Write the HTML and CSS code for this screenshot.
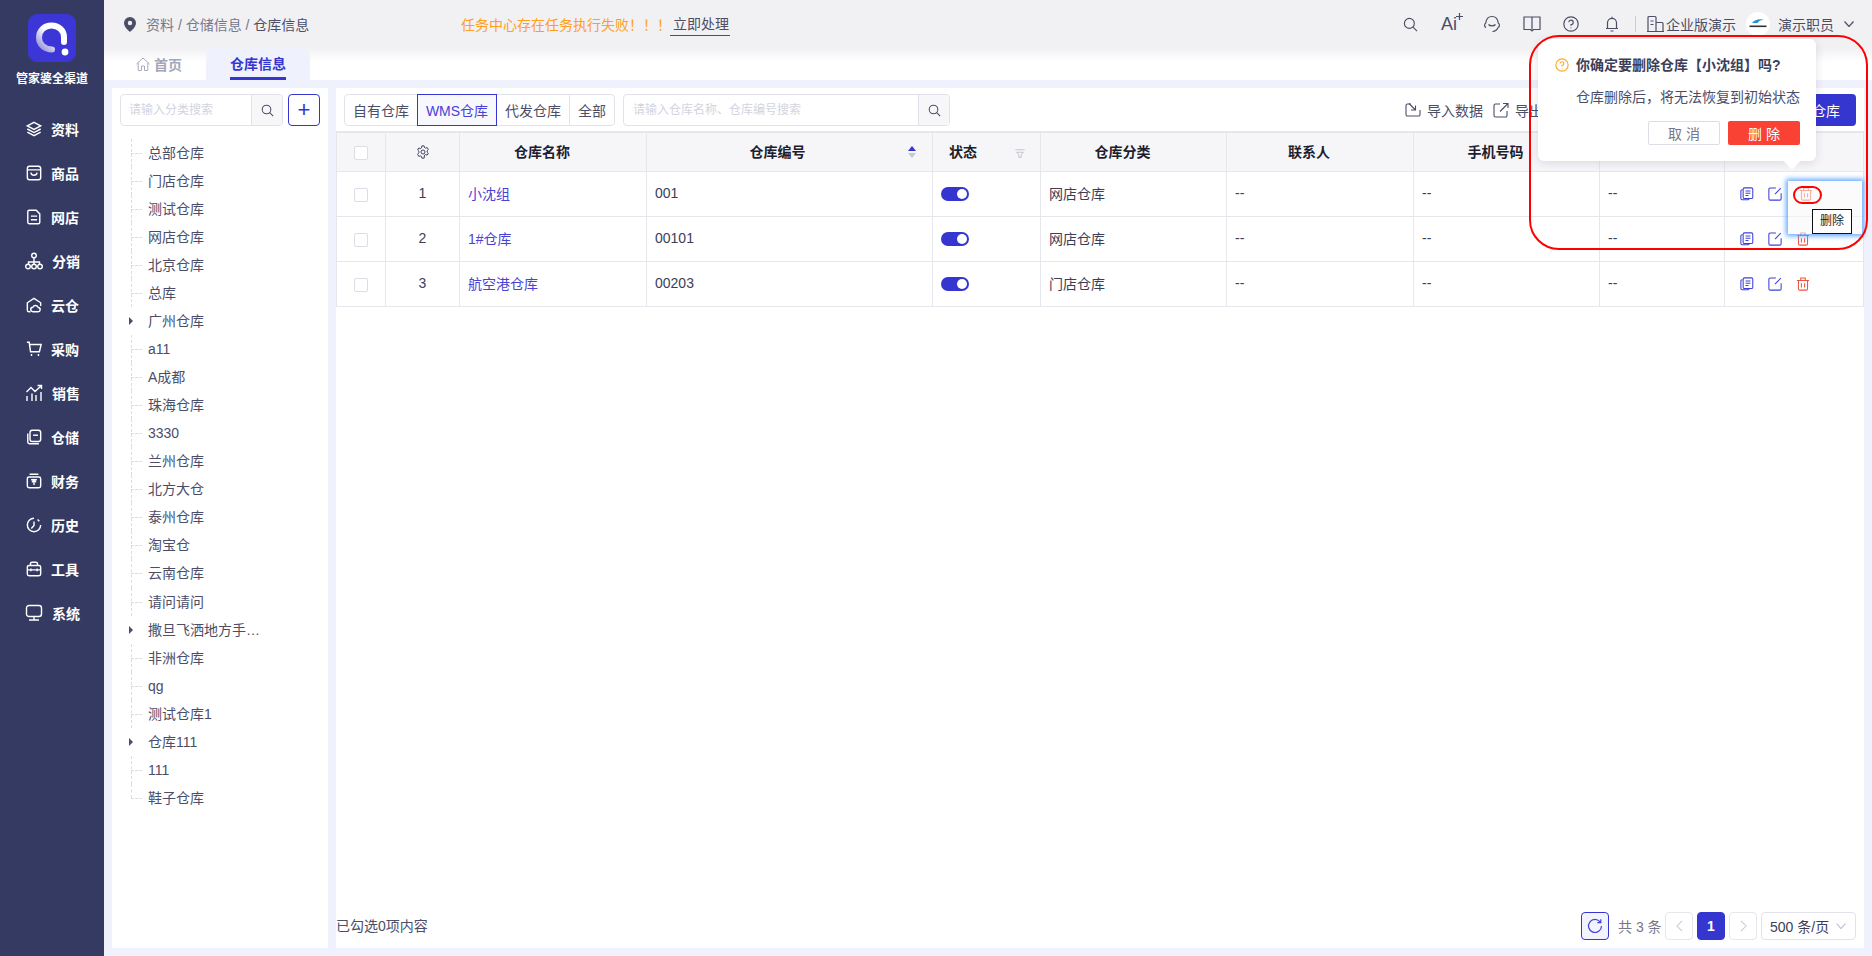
FILE: index.html
```html
<!DOCTYPE html>
<html lang="zh-CN">
<head>
<meta charset="utf-8">
<title>仓库信息</title>
<link rel="stylesheet" href="styles.css">
</head>
<body>
<svg class="sprite" width="0" height="0" aria-hidden="true">
  <symbol id="i-search" viewBox="0 0 16 16"><circle cx="6.800" cy="6.800" r="5.300"/><path d="M10.700 10.700 15 15"/></symbol>
  <symbol id="i-copy" viewBox="0 0 16 16"><path d="M3 3.200H2.400A1.400 1.400 0 0 0 1 4.600v8.600a1.400 1.400 0 0 0 1.400 1.400H9a1.400 1.400 0 0 0 1.400-1.200"/><rect x="3.600" y="1" width="11" height="12.200" rx="1.600"/><path d="M6.300 4.600h5.600M6.300 7.200h5.600M6.300 9.800h3.400"/></symbol>
  <symbol id="i-edit" viewBox="0 0 16 16"><path d="M9 1.200H2.600A1.600 1.600 0 0 0 1 2.800v10.600A1.600 1.600 0 0 0 2.600 15h10.800a1.600 1.600 0 0 0 1.600-1.600V7"/><path d="M8 8.200 14.600 1.400"/></symbol>
  <symbol id="i-trash" viewBox="0 0 16 16"><path d="M1 4h14M5.400 4V1.200h5.200V4M2.800 4v9.400A1.600 1.600 0 0 0 4.400 15h7.200a1.600 1.600 0 0 0 1.600-1.600V4M6.200 7v5M9.800 7v5"/></symbol>
</svg>

<div class="app">
  <aside class="sidebar">
    <div class="brand">
      <svg class="logo" viewBox="0 0 48 48">
        <defs><linearGradient id="lg" x1="0" y1="1" x2="1" y2="0"><stop offset="0" stop-color="#8f8bd8"/><stop offset=".55" stop-color="#fff"/></linearGradient></defs>
        <rect width="48" height="48" rx="9" fill="#3d36d6"/>
        <path d="M24 35.500C16 35.500 11 30 11 23.500 11 16.500 16.500 11.500 23.500 11.500S36 16.500 36 23v5" fill="none" stroke="url(#lg)" stroke-width="6" stroke-linecap="round"/>
        <circle cx="37" cy="38" r="3.400" fill="#fff"/>
      </svg>
      <div class="brand-name">管家婆全渠道</div>
    </div>
    <nav class="menu">
      <a class="menu-item"><svg class="menu-icon" viewBox="0 0 18 18"><path d="M9 1.500 16.500 5.500 9 9.500 1.500 5.500Z"/><path d="M1.500 9 9 13l7.500-4M1.500 12.500 9 16.500l7.500-4"/></svg><span>资料</span></a>
      <a class="menu-item"><svg class="menu-icon" viewBox="0 0 18 18"><rect x="1.500" y="1.500" width="15" height="15" rx="2.500"/><path d="M1.500 5.500h15M5.500 8.500c.4 2 1.800 3 3.500 3s3.100-1 3.500-3"/></svg><span>商品</span></a>
      <a class="menu-item"><svg class="menu-icon" viewBox="0 0 18 18"><path d="M3.500 1.500h8l4 4v9.500a1.500 1.500 0 0 1-1.500 1.500H3.500A1.500 1.500 0 0 1 2 15V3a1.500 1.500 0 0 1 1.500-1.500Z"/><path d="M5.500 8h7M5.500 12h7"/></svg><span>网店</span></a>
      <a class="menu-item menu-wide"><svg class="menu-icon" viewBox="0 0 18 18"><circle cx="9" cy="3.500" r="2.300"/><circle cx="3" cy="14.500" r="2.300"/><circle cx="9" cy="14.500" r="2.300"/><circle cx="15" cy="14.500" r="2.300"/><path d="M9 5.800v6.400M3.500 12V10h11v2"/></svg><span>分销</span></a>
      <a class="menu-item"><svg class="menu-icon" viewBox="0 0 18 18"><path d="M5 16.500H3a1.500 1.500 0 0 1-1.500-1.500V6.500L9 1.500l7.500 5V10"/><path d="M8 16.500a2.500 2.500 0 0 1-.3-5 3.300 3.300 0 0 1 6.100.4 2.300 2.300 0 0 1-.3 4.600Z"/></svg><span>云仓</span></a>
      <a class="menu-item"><svg class="menu-icon" viewBox="0 0 18 18"><path d="M1 1.500h2.600l1.500 10.500h10l1.900-8H3.900"/><path d="M6.200 14.500v2.500M14 14.500v2.500"/></svg><span>采购</span></a>
      <a class="menu-item menu-wide"><svg class="menu-icon" viewBox="0 0 18 18"><path d="M1.500 8 6 3.500l4 4 6-5.500M12.500 1.500H16.500V5M2 12v5M7 9.500V17M11 11v6M16 8v9"/></svg><span>销售</span></a>
      <a class="menu-item"><svg class="menu-icon" viewBox="0 0 18 18"><path d="M2 5v9.500A2 2 0 0 0 4 16.500h10.500"/><rect x="4.500" y="1.500" width="12" height="12.500" rx="2.500"/><path d="M8 7h5.500"/></svg><span>仓储</span></a>
      <a class="menu-item"><svg class="menu-icon" viewBox="0 0 18 18"><rect x="1.500" y="4.500" width="15" height="12" rx="2"/><path d="M4 1.500h10M5.800 7.500h6.400M9 7.500v6M6.800 10.500 9 7.500l2.200 3"/></svg><span>财务</span></a>
      <a class="menu-item"><svg class="menu-icon" viewBox="0 0 18 18"><path d="M16.500 9A7.500 7.500 0 1 1 9 1.500"/><path d="M9 5v4.500L6 13M13 2.800l2 2"/></svg><span>历史</span></a>
      <a class="menu-item"><svg class="menu-icon" viewBox="0 0 18 18"><rect x="1.500" y="5" width="15" height="11.500" rx="2"/><path d="M5 5V3.500a2 2 0 0 1 2-2h4a2 2 0 0 1 2 2V5M1.500 10h15M5.500 8.500v3M12.500 8.500v3"/></svg><span>工具</span></a>
      <a class="menu-item menu-wide"><svg class="menu-icon" viewBox="0 0 18 18"><rect x="1.500" y="1.500" width="15" height="11" rx="2.500"/><path d="M4 16h10M9 12.500V16"/></svg><span>系统</span></a>
    </nav>
  </aside>

  <div class="workspace">
    <header class="topbar">
      <div class="crumbs">
        <svg class="pin" viewBox="0 0 12 15"><path d="M6 0a6 6 0 0 0-6 6c0 3.800 4.300 7.600 6 9 1.700-1.400 6-5.200 6-9a6 6 0 0 0-6-6Zm0 8.200A2.200 2.200 0 1 1 6 3.800a2.200 2.200 0 0 1 0 4.400Z"/></svg>
        <span class="crumb-text">资料 / 仓储信息 / <em class="crumb-last">仓库信息</em></span>
      </div>
      <div class="notice"><span class="notice-text">任务中心存在任务执行失败！！！</span><a class="notice-link">立即处理</a></div>
      <div class="tools">
        <svg class="tool tool-search"><use href="#i-search"/></svg>
        <span class="tool-ai">Ai<svg class="ai-star" viewBox="0 0 8 8"><path d="M4 0v8M0 4h8"/></svg></span>
        <svg class="tool tool-head" viewBox="0 0 18 18"><path d="M3 12.500C1.300 11.800 1 9 2.800 8 3.200 4 5.800 1.500 9 1.500S14.800 4 15.200 8c1.800 1 1.500 3.800-.2 4.500"/><path d="M5.500 9.500c1.500 1.800 5.500 1.800 7 0"/><path d="M15 12.500c-.8 2.400-3 3.800-5.500 4"/></svg>
        <svg class="tool tool-book" viewBox="0 0 18 16"><path d="M1 1h16v12.500h-6.500L9 15l-1.500-1.500H1ZM9 1v12.500"/></svg>
        <svg class="tool tool-help" viewBox="0 0 16 16"><circle cx="8" cy="8" r="7.200"/><path d="M5.800 6.200A2.200 2.200 0 1 1 8 8.600v1.200M8 11.600v.6"/></svg>
        <svg class="tool tool-bell" viewBox="0 0 14 16"><path d="M1 12.500h12M2.500 12.500V6.800a4.500 4.500 0 0 1 9 0v5.700M5.500 15h3M7 .8v1.500"/></svg>
        <span class="tool-sep"></span>
        <svg class="tool tool-org" viewBox="0 0 18 18"><path d="M1.500 16.500V2.500a1 1 0 0 1 1-1h6a1 1 0 0 1 1 1v14M9.500 7.500h6a1 1 0 0 1 1 1v8M.5 16.500h17M4 6h3M4 9.500h3"/></svg>
        <span class="org-name">企业版演示</span>
        <svg class="avatar" viewBox="0 0 24 24"><circle cx="12" cy="12" r="12" fill="#fff"/><path d="M6 11c3-3.500 8-4.500 12-3-3-.3-5 .5-6.500 3Z" fill="#1f8fe0"/><rect x="3.500" y="13.500" width="17" height="1.600" fill="#333"/></svg>
        <span class="user-name">演示职员</span>
        <svg class="tool tool-chev" viewBox="0 0 10 6"><path d="M.5.500 5 5.500 9.500.500"/></svg>
      </div>
    </header>

    <div class="tabs">
      <a class="tab tab-home"><svg class="home-icon" viewBox="0 0 14 14"><path d="M.5 7 7 1l6.500 6M2.200 5.800v7.700h3.300V9h3v4.500h3.300V5.800"/></svg>首页</a>
      <a class="tab tab-active"><span class="tab-label">仓库信息</span></a>
    </div>

    <main class="content">
      <section class="tree-panel">
        <div class="tree-search">
          <div class="search-box">
            <span class="search-input">请输入分类搜索</span>
            <span class="search-btn"><svg class="search-icon"><use href="#i-search"/></svg></span>
          </div>
          <button class="add-btn">+</button>
        </div>
        <ul class="tree">
          <li class="leaf">总部仓库</li><li class="leaf">门店仓库</li><li class="leaf">测试仓库</li><li class="leaf">网店仓库</li><li class="leaf">北京仓库</li><li class="leaf">总库</li>
          <li class="branch">广州仓库</li>
          <li class="leaf">a11</li><li class="leaf">A成都</li><li class="leaf">珠海仓库</li><li class="leaf">3330</li><li class="leaf">兰州仓库</li><li class="leaf">北方大仓</li><li class="leaf">泰州仓库</li><li class="leaf">淘宝仓</li><li class="leaf">云南仓库</li><li class="leaf">请问请问</li>
          <li class="branch">撒旦飞洒地方手…</li>
          <li class="leaf">非洲仓库</li><li class="leaf">qg</li><li class="leaf">测试仓库1</li>
          <li class="branch">仓库111</li>
          <li class="leaf">111</li><li class="leaf leaf-last">鞋子仓库</li>
        </ul>
      </section>

      <section class="main-panel">
        <div class="toolbar">
          <div class="segments">
            <span class="seg seg-own">自有仓库</span>
            <span class="seg seg-wms">WMS仓库</span>
            <span class="seg seg-drop">代发仓库</span>
            <span class="seg seg-all">全部</span>
          </div>
          <div class="search-box search-wide">
            <span class="search-input">请输入仓库名称、仓库编号搜索</span>
            <span class="search-btn"><svg class="search-icon"><use href="#i-search"/></svg></span>
          </div>
          <div class="toolbar-right">
            <a class="tool-link"><svg class="link-icon" viewBox="0 0 16 16"><path d="M6 2H2.500A1.500 1.500 0 0 0 1 3.500v9A1.500 1.500 0 0 0 2.500 14h11a1.500 1.500 0 0 0 1.500-1.500V8"/><path d="M4 1.500 10.500 8M10.500 3.500V8H6"/></svg>导入数据</a>
            <a class="tool-link"><svg class="link-icon" viewBox="0 0 16 16"><path d="M7 2H2.500A1.500 1.500 0 0 0 1 3.500v10A1.500 1.500 0 0 0 2.500 15h10a1.500 1.500 0 0 0 1.500-1.500V9"/><path d="M7 9.500 15 1.500M10 1.500h5V6"/></svg>导出</a>
            <button class="primary-btn">新增仓库</button>
          </div>
        </div>

        <table class="grid">
          <colgroup>
            <col class="c-check"><col class="c-index"><col class="c-name"><col class="c-code"><col class="c-status"><col class="c-cat"><col class="c-contact"><col class="c-phone"><col class="c-addr"><col class="c-ops">
          </colgroup>
          <thead>
            <tr>
              <th class="th-plain"><span class="check"></span></th>
              <th class="th-plain"><svg class="gear" viewBox="0 0 16 16"><path d="M6.700 1h2.600l.4 1.900 1.300.7 1.800-.7 1.300 2.300-1.400 1.300v1.500l1.400 1.300-1.300 2.300-1.800-.7-1.300.7L9.300 15H6.700l-.4-1.900-1.300-.7-1.800.7-1.300-2.300L3.300 8.500V7L1.900 5.700l1.300-2.300 1.800.7 1.300-.7Z"/><circle cx="8" cy="8" r="2.300"/></svg></th>
              <th>仓库名称</th>
              <th class="th-sort"><span class="th-flex">仓库编号</span><span class="sorter"><i class="sort-up"></i><i class="sort-down"></i></span></th>
              <th class="th-status"><span>状态</span><svg class="filter" viewBox="0 0 12 10"><path d="M.5.500h11M2 3.500h8L7.500 6.500v3h-3v-3Z"/></svg></th>
              <th>仓库分类</th>
              <th>联系人</th>
              <th>手机号码</th>
              <th>地址</th>
              <th>操作</th>
            </tr>
          </thead>
          <tbody>
            <tr>
              <td class="center ctl"><span class="check"></span></td><td class="center">1</td><td><a class="link">小沈组</a></td><td>001</td><td class="ctl"><span class="switch"></span></td><td>网店仓库</td><td>--</td><td>--</td><td>--</td>
              <td class="ctl"><div class="ops"><svg class="op op-copy"><use href="#i-copy"/></svg><svg class="op op-edit"><use href="#i-edit"/></svg><svg class="op op-del op-hover"><use href="#i-trash"/></svg></div></td>
            </tr>
            <tr>
              <td class="center ctl"><span class="check"></span></td><td class="center">2</td><td><a class="link">1#仓库</a></td><td>00101</td><td class="ctl"><span class="switch"></span></td><td>网店仓库</td><td>--</td><td>--</td><td>--</td>
              <td class="ctl"><div class="ops"><svg class="op op-copy"><use href="#i-copy"/></svg><svg class="op op-edit"><use href="#i-edit"/></svg><svg class="op op-del"><use href="#i-trash"/></svg></div></td>
            </tr>
            <tr>
              <td class="center ctl"><span class="check"></span></td><td class="center">3</td><td><a class="link">航空港仓库</a></td><td>00203</td><td class="ctl"><span class="switch"></span></td><td>门店仓库</td><td>--</td><td>--</td><td>--</td>
              <td class="ctl"><div class="ops"><svg class="op op-copy"><use href="#i-copy"/></svg><svg class="op op-edit"><use href="#i-edit"/></svg><svg class="op op-del"><use href="#i-trash"/></svg></div></td>
            </tr>
          </tbody>
        </table>

        <footer class="footer">
          <span class="selected">已勾选0项内容</span>
          <div class="pager">
            <span class="page-refresh"><svg class="refresh-icon" viewBox="0 0 16 16"><path d="M13.500 4.500A6.500 6.500 0 1 0 14.500 8M13.800 1.200v3.500h-3.500"/></svg></span>
            <span class="total">共 3 条</span>
            <span class="page-btn"><svg class="page-arrow" viewBox="0 0 8 14"><path d="M7 1 1 7l6 6"/></svg></span>
            <span class="page-btn page-current">1</span>
            <span class="page-btn"><svg class="page-arrow" viewBox="0 0 8 14"><path d="m1 1 6 6-6 6"/></svg></span>
            <span class="page-size">500 条/页<svg class="page-chev" viewBox="0 0 10 6"><path d="M.5.500 5 5.500 9.500.500"/></svg></span>
          </div>
        </footer>
      </section>
    </main>
  </div>
</div>

<div class="focus-box"></div>
<div class="tooltip">删除</div>
<div class="trash-mark"></div>
<div class="popover">
  <div class="pop-title"><svg class="pop-icon" viewBox="0 0 16 16"><circle cx="8" cy="8" r="7"/><path d="M5.900 6.200A2.100 2.100 0 1 1 8 8.500v1.100M8 11.300v.7"/></svg>你确定要删除仓库【小沈组】吗?</div>
  <div class="pop-desc">仓库删除后，将无法恢复到初始状态</div>
  <div class="pop-actions"><button class="pop-cancel">取 消</button><button class="pop-ok">删 除</button></div>
</div>
<div class="annotation"></div>
</body>
</html>
```

FILE: styles.css
```css
* { box-sizing: border-box; }
html, body { margin: 0; padding: 0; height: 100%; overflow: hidden; }
body {
  position: relative;
  font-family: "Liberation Sans", "Noto Sans CJK SC", sans-serif;
  font-size: 14px;
  color: #4c4e68;
  background: #eff1fd;
}
ul { list-style: none; margin: 0; padding: 0; }
button { font-family: inherit; }
a { color: inherit; text-decoration: none; }
em { font-style: normal; }
.sprite { position: absolute; }

.app { display: flex; height: 956px; }

/* sidebar */
.sidebar { width: 104px; flex: none; background: #343a61; color: #fff; }
.brand { display: flex; flex-direction: column; align-items: center; padding-top: 14px; }
.logo { width: 48px; height: 48px; display: block; }
.brand-name { margin-top: 9px; font-size: 12px; line-height: 16px; font-weight: 700; white-space: nowrap; }
.menu { display: flex; flex-direction: column; padding-top: 20px; }
.menu-item { display: flex; align-items: center; height: 44px; padding-left: 26px; font-weight: 700; gap: 9px; }
.menu-icon { width: 16px; height: 16px; fill: none; stroke: #fff; stroke-width: 1.6; flex: none; }
.menu-wide { padding-left: 25px; }
.menu-wide .menu-icon { width: 18px; height: 18px; stroke-width: 1.4; }

/* top */
.workspace { flex: 1; min-width: 0; display: flex; flex-direction: column; }
.topbar { height: 48px; flex: none; display: flex; align-items: center; background: #f1f1f4; padding-left: 20px; padding-right: 18px; }
.crumbs { display: flex; align-items: center; width: 337px; flex: none; }
.pin { width: 12px; height: 15px; fill: #4c4e68; flex: none; margin-right: 10px; }
.crumb-text { color: #75778c; }
.crumb-last { color: #4c4e68; }
.notice { display: flex; align-items: center; }
.notice-text { color: #ff9f1c; width: 209px; white-space: nowrap; }
.notice-link { color: #4c4e68; padding: 2px 1px 1px 3px; border-bottom: 1px solid #4c4e68; line-height: 20px; }
.tools { margin-left: auto; display: flex; align-items: center; }
.tool { fill: none; stroke: #4c4e68; stroke-width: 1.2; flex: none; }
.tool-search { width: 15px; height: 15px; margin-right: 22px; }
.tool-ai { position: relative; font-size: 18px; line-height: 20px; width: 21px; margin-right: 22px; color: #4c4e68; left: 1px; }
.ai-star { position: absolute; right: -1px; top: -1px; width: 7px; height: 7px; fill: none; stroke: #4c4e68; stroke-width: 1.4; }
.tool-head { width: 18px; height: 18px; margin-right: 22px; }
.tool-book { width: 18px; height: 16px; margin-right: 22px; }
.tool-help { width: 16px; height: 16px; margin-right: 26px; }
.tool-bell { width: 14px; height: 16px; margin-right: 16px; }
.tool-sep { width: 1px; height: 16px; background: #c9cbdc; margin-right: 10px; }
.tool-org { width: 19px; height: 18px; margin-right: 1px; }
.org-name { margin-right: 10px; white-space: nowrap; }
.avatar { width: 24px; height: 24px; flex: none; margin-right: 8px; }
.user-name { margin-right: 10px; white-space: nowrap; }
.tool-chev { width: 10px; height: 6px; }

/* tabs */
.tabs { height: 32px; flex: none; display: flex; background: linear-gradient(#f1f1f4, #fff 14px); padding-left: 32px; }
.tab { display: flex; align-items: center; }
.tab-home { width: 70px; color: #a3a6b8; font-weight: 700; }
.home-icon { width: 14px; height: 14px; fill: none; stroke: #a9acbd; stroke-width: 1; margin-right: 4px; }
.tab-active { width: 104px; justify-content: center; background: #eff1fd; border-radius: 10px 10px 0 0; color: #3535d0; font-weight: 700; }
.tab-label { height: 32px; line-height: 32px; border-bottom: 3px solid #3535d0; width: 56px; }

/* content */
.content { flex: 1; min-height: 0; display: flex; gap: 8px; padding: 8px; }
.tree-panel { width: 216px; flex: none; background: #fff; padding: 6px 8px; }
.tree-search { display: flex; gap: 5px; }
.search-box { display: flex; width: 163px; height: 32px; border: 1px solid #e2e2ea; border-radius: 4px; overflow: hidden; flex: none; }
.search-input { flex: 1; min-width: 0; padding-left: 8px; line-height: 30px; font-size: 12px; color: #d3d4de; white-space: nowrap; }
.search-btn { width: 31px; flex: none; display: flex; align-items: center; justify-content: center; background: #f7f7fa; border-left: 1px solid #e2e2ea; }
.search-icon { width: 13px; height: 13px; fill: none; stroke: #4c4e68; stroke-width: 1.3; }
.add-btn { width: 32px; height: 32px; padding: 0; border: 1px solid #3535d0; border-radius: 4px; background: #fff; color: #3535d0; font-size: 22px; line-height: 28px; flex: none; }

.tree { margin-top: 13px; }
.leaf, .branch { position: relative; height: 28.04px; line-height: 28px; padding-left: 28px; white-space: nowrap; }
.leaf::before { content: ""; position: absolute; left: 11px; top: 0; bottom: 0; border-left: 1px dashed #dcdce4; }
.leaf-last::before { bottom: 50%; }
.leaf::after { content: ""; position: absolute; left: 11px; width: 11px; top: 50%; border-top: 1px dashed #dcdce4; }
.branch::before { content: ""; position: absolute; left: 9px; top: 10px; border-left: 4px solid #4c4e68; border-top: 4px solid transparent; border-bottom: 4px solid transparent; }

/* main panel */
.main-panel { flex: 1; min-width: 0; background: #fff; display: flex; flex-direction: column; }
.toolbar { height: 43px; flex: none; display: flex; align-items: flex-start; padding: 6px 8px 0; }
.segments { display: flex; height: 32px; border: 1px solid #e2e2ea; border-radius: 4px; flex: none; }
.seg { display: flex; align-items: center; justify-content: center; color: #4c4e68; margin: -1px 0; height: 32px; }
.seg-own { width: 72px; }
.seg-wms { width: 80px; border: 1px solid #3535d0; color: #4a42d6; background: #f7f7fe; }
.seg-drop { width: 73px; border-right: 1px solid #e2e2ea; }
.seg-all { width: 44px; }
.search-wide { width: 327px; margin-left: 8px; }
.search-wide .search-input { padding-left: 9px; }
.toolbar-right { margin-left: auto; display: flex; align-items: center; height: 32px; }
.tool-link { display: flex; align-items: center; margin-right: 10px; }
.link-icon { width: 16px; height: 16px; fill: none; stroke: #4c4e68; stroke-width: 1.1; margin-right: 6px; }
.primary-btn { width: 88px; height: 32px; margin-left: 215px; border: 0; border-radius: 4px; background: #3535d0; color: #fff; font-size: 14px; }

.grid { width: 100%; table-layout: fixed; border-collapse: separate; border-spacing: 0; flex: none; color: #3c3e58; }
.c-check { width: 50px; } .c-index { width: 74px; } .c-name { width: 187px; } .c-code { width: 286px; } .c-status { width: 108px; }
.c-cat { width: 186px; } .c-contact { width: 187px; } .c-phone { width: 186px; } .c-addr { width: 125px; } .c-ops { width: 139px; }
.grid th { height: 41px; background: #f6f6f9; border-top: 2px solid #e6e6ed; border-bottom: 1px solid #e6e6ed; border-right: 1px solid #e6e6ed; color: #1c1d2e; font-weight: 700; padding: 0 22px 2px 0; position: relative; }
.grid th.th-plain { padding: 0; }
.grid th:first-child, .grid td:first-child { border-left: 1px solid #e6e6ed; }
.grid td { height: 45px; padding: 0 8px 2px; border-bottom: 1px solid #e6e6ed; border-right: 1px solid #e6e6ed; }
.grid td.center { text-align: center; padding: 0 0 2px; }
.grid td.ctl { padding-bottom: 0; }
.grid th.th-sort { padding-right: 24px; }
.sorter { position: absolute; right: 16px; top: 13px; display: flex; flex-direction: column; gap: 2px; }
.sort-up { width: 0; height: 0; border-left: 4px solid transparent; border-right: 4px solid transparent; border-bottom: 5px solid #3535d0; }
.sort-down { width: 0; height: 0; border-left: 4px solid transparent; border-right: 4px solid transparent; border-top: 5px solid #c8c9d3; }
.grid th.th-status { text-align: left; padding: 0 0 2px 16px; }
.filter { position: absolute; right: 15px; top: 16px; width: 10px; height: 9px; fill: none; stroke: #b9bac6; stroke-width: 1; }
.gear { width: 14px; height: 14px; fill: none; stroke: #3c3e58; stroke-width: 1.1; vertical-align: -2px; }
.check { display: inline-block; width: 14px; height: 14px; border: 1px solid #dcdde5; border-radius: 2px; background: #fff; vertical-align: middle; }
.link { color: #4a42d6; }
.switch { display: block; position: relative; width: 28px; height: 14px; border-radius: 7px; background: #3535d0; }
.switch::after { content: ""; position: absolute; right: 2px; top: 2px; width: 10px; height: 10px; border-radius: 50%; background: #fff; }
.ops { display: flex; align-items: center; gap: 14px; padding-left: 7px; }
.op { width: 14px; height: 14px; fill: none; stroke-width: 1.2; flex: none; }
.op-copy, .op-edit { stroke: #3f3fd6; }
.op-del { stroke: #f0533e; }
.op-hover { margin-left: 3px; }

/* footer */
.footer { margin-top: auto; height: 36px; flex: none; display: flex; align-items: flex-start; justify-content: space-between; padding-right: 8px; }
.selected { line-height: 28px; color: #4c4e68; }
.pager { display: flex; align-items: center; gap: 4px; }
.page-refresh { width: 28px; height: 28px; border: 1px solid #3535d0; border-radius: 4px; background: #f3f3fd; display: flex; align-items: center; justify-content: center; margin-right: 5px; }
.refresh-icon { width: 16px; height: 16px; fill: none; stroke: #3f3fd6; stroke-width: 1.2; }
.total { width: 43px; color: #75778c; white-space: nowrap; }
.page-btn { width: 28px; height: 28px; border: 1px solid #e6e6ed; border-radius: 4px; display: flex; align-items: center; justify-content: center; }
.page-current { background: #3535d0; border-color: #3535d0; color: #fff; font-weight: 700; }
.page-arrow { width: 7px; height: 12px; fill: none; stroke: #c9cad4; stroke-width: 1.2; }
.page-size { width: 95px; height: 28px; border: 1px solid #e2e2ea; border-radius: 4px; display: flex; align-items: center; padding-left: 8px; color: #3c3e58; white-space: nowrap; }
.page-chev { width: 10px; height: 6px; margin-left: 7px; fill: none; stroke: #b9bac6; stroke-width: 1.1; }

/* overlays */
.focus-box { position: absolute; left: 1788px; top: 181px; width: 74px; height: 53px; background: rgba(247,247,250,.55); box-shadow: 0 0 5px 2px #62a8ff; }
.tooltip { position: absolute; left: 1812px; top: 209px; width: 40px; height: 25px; background: #fff; border: 1px solid #111; color: #222; font-size: 12px; line-height: 23px; text-align: center; }
.trash-mark { position: absolute; left: 1793px; top: 186px; width: 29px; height: 18px; border: 2px solid #f00; border-radius: 9px; }
.popover { position: absolute; left: 1538px; top: 39px; width: 278px; height: 122px; background: #fff; border-radius: 6px; box-shadow: 0 2px 10px rgba(40,40,70,.14); padding: 16px 16px 0 17px; }
.popover::after { content: ""; position: absolute; left: 248px; bottom: -6px; width: 12px; height: 12px; background: #fff; transform: rotate(45deg); }
.pop-title { display: flex; align-items: center; font-weight: 700; color: #3c3e58; line-height: 20px; white-space: nowrap; }
.pop-icon { width: 14px; height: 14px; fill: none; stroke: #ffa726; stroke-width: 1.3; margin-right: 7px; flex: none; }
.pop-desc { margin-top: 12px; padding-left: 21px; line-height: 20px; color: #4c4e68; white-space: nowrap; }
.pop-actions { display: flex; justify-content: flex-end; gap: 8px; margin-top: 14px; position: relative; z-index: 1; }
.pop-cancel, .pop-ok { width: 72px; height: 24px; padding: 0; border-radius: 2px; font-size: 14px; }
.pop-cancel { background: #fff; border: 1px solid #dcdde5; color: #75778c; }
.pop-ok { background: #f94233; border: 0; color: #fff; }
.annotation { position: absolute; left: 1529px; top: 35px; width: 339px; height: 215px; border: 2px solid #f00; border-radius: 30px; pointer-events: none; }
```
